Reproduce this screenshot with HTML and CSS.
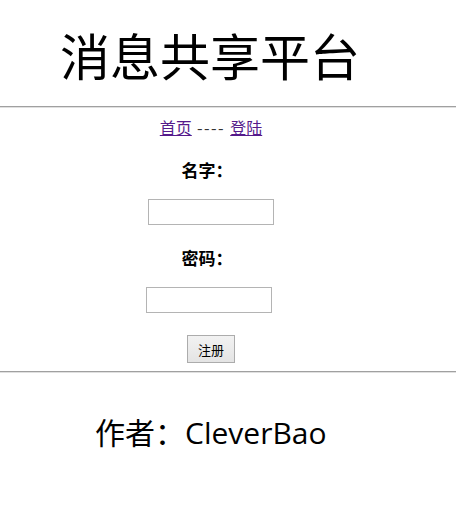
FILE: index.html
```html
<!DOCTYPE html>
<html lang="zh">
<head>
<meta charset="utf-8">
<title>消息共享平台</title>
<link rel="stylesheet" href="styles.css">
</head>
<body>
<header class="header">
  <h1 class="title">消息共享平台</h1>
</header>
<hr class="rule">
<main class="main">
  <nav class="nav"><a href="#">首页</a><span class="sep"> ---- </span><a href="#">登陆</a></nav>
  <form class="form">
    <label class="label">名字：</label>
    <input class="field field-name" type="text">
    <label class="label">密码：</label>
    <input class="field field-pass" type="password">
    <button class="btn" type="button">注册</button>
  </form>
</main>
<hr class="rule">
<footer class="footer">作者：CleverBao</footer>
</body>
</html>
```

FILE: styles.css
```css
html, body {
  margin: 0;
  padding: 0;
  background: #fff;
}
body {
  font-family: "Noto Sans CJK SC", "Open Sans", sans-serif;
  color: #000;
}
.header {
  height: 106px;
  display: flex;
  align-items: center;
  padding-left: 60px;
}
.title {
  margin: 0;
  font-size: 50px;
  font-weight: 400;
  line-height: 1;
  padding-top: 1px;
}
.rule {
  margin: 0;
  border: 0;
  height: 0;
  border-top: 1px solid #a0a0a0;
  border-bottom: 1px solid #e0e0e0;
}
.main {
  width: 422px;
  display: flex;
  flex-direction: column;
  align-items: center;
  padding-top: 9px;
  padding-bottom: 8px;
}
.nav {
  font-size: 16px;
  line-height: 20px;
  color: #333;
}
.nav a {
  color: #551a8b;
}
.sep {
  letter-spacing: 1.5px;
}
.form {
  display: flex;
  flex-direction: column;
  align-items: center;
}
.label {
  font-weight: 700;
  font-size: 17px;
  line-height: 22px;
  margin-top: 22px;
  margin-left: -8px;
}
.field {
  width: 126px;
  height: 26px;
  box-sizing: border-box;
  border: 1px solid #b4b4b4;
  margin-top: 18px;
  padding: 0;
  background: #fff;
}
.field-name { margin-left: 0; }
.field-pass { margin-left: -4px; }
.btn {
  margin-top: 22px;
  width: 48px;
  height: 28px;
  box-sizing: border-box;
  border: 1px solid #acacac;
  background: linear-gradient(#f2f2f2, #e4e4e4);
  font-family: "Noto Sans CJK SC", sans-serif;
  font-size: 13px;
  padding: 0;
  color: #000;
}
.footer {
  padding-left: 95px;
  padding-top: 40px;
  font-size: 30px;
  line-height: 40px;
  font-family: "Open Sans", "Noto Sans CJK SC", sans-serif;
}
```
